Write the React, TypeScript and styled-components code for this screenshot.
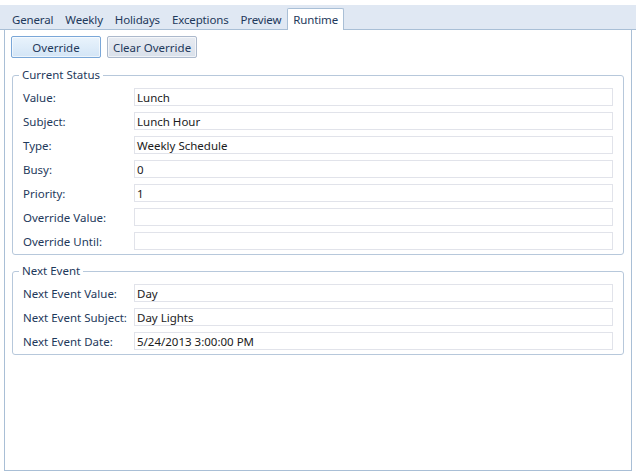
import styled, { createGlobalStyle } from 'styled-components';

const GlobalStyle = createGlobalStyle`
  html, body {
    margin: 0;
    padding: 0;
    background: #ffffff;
  }
  body {
    font-family: 'Noto Sans', 'Open Sans', Arial, sans-serif;
    font-size: 11.5px;
  }
`;

const tabs = ['General', 'Weekly', 'Holidays', 'Exceptions', 'Preview', 'Runtime'];

const currentStatus: { label: string; value: string }[] = [
  { label: 'Value:', value: 'Lunch' },
  { label: 'Subject:', value: 'Lunch Hour' },
  { label: 'Type:', value: 'Weekly Schedule' },
  { label: 'Busy:', value: '0' },
  { label: 'Priority:', value: '1' },
  { label: 'Override Value:', value: '' },
  { label: 'Override Until:', value: '' },
];

const nextEvent: { label: string; value: string }[] = [
  { label: 'Next Event Value:', value: 'Day' },
  { label: 'Next Event Subject:', value: 'Day Lights' },
  { label: 'Next Event Date:', value: '5/24/2013 3:00:00 PM' },
];

function App() {
  return (
    <Window>
      <GlobalStyle />
      <TabStrip>
        {tabs.map((tab) => (
          <TabItem key={tab} $active={tab === 'Runtime'}>
            {tab}
          </TabItem>
        ))}
      </TabStrip>

      <Panel>
        <Toolbar>
          <Button $primary>Override</Button>
          <Button>Clear Override</Button>
        </Toolbar>

        <GroupBox>
          <legend>Current Status</legend>
          {currentStatus.map((row) => (
            <FieldRow key={row.label}>
              <FieldLabel>{row.label}</FieldLabel>
              <TextBox>{row.value}</TextBox>
            </FieldRow>
          ))}
        </GroupBox>

        <GroupBox>
          <legend>Next Event</legend>
          {nextEvent.map((row) => (
            <FieldRow key={row.label}>
              <FieldLabel>{row.label}</FieldLabel>
              <TextBox>{row.value}</TextBox>
            </FieldRow>
          ))}
        </GroupBox>
      </Panel>
    </Window>
  );
}

const Window = styled.div`
  width: 636px;
  height: 475px;
  padding-top: 5px;
  box-sizing: border-box;
  display: flex;
  flex-direction: column;
  background: #ffffff;
  overflow: hidden;
`;

const TabStrip = styled.div`
  height: 25px;
  flex: none;
  display: flex;
  align-items: flex-end;
  padding-left: 6px;
  background: #e0e8f3;
  border-bottom: 1px solid #a9bfd6;
  box-sizing: border-box;
`;

const TabItem = styled.div<{ $active?: boolean }>`
  height: ${({ $active }) => ($active ? '22px' : '20px')};
  padding: 0 5px ${({ $active }) => ($active ? '1px' : '0')};
  display: flex;
  align-items: center;
  box-sizing: border-box;
  color: #1e395b;
  white-space: nowrap;
  letter-spacing: -0.15px;
  margin-bottom: ${({ $active }) => ($active ? '-1px' : '0')};
  background: ${({ $active }) => ($active ? '#ffffff' : 'transparent')};
  border: 1px solid ${({ $active }) => ($active ? '#a9bfd6' : 'transparent')};
  border-bottom: none;
  border-radius: 2px 2px 0 0;
`;

const Panel = styled.div`
  flex: 1;
  margin: 0 4px 4px 4px;
  border: 1px solid #a9bfd6;
  border-top: none;
  padding: 6px 7px 0 6px;
  display: flex;
  flex-direction: column;
`;

const Toolbar = styled.div`
  display: flex;
  gap: 6px;
  margin-bottom: 9px;
`;

const Button = styled.button<{ $primary?: boolean }>`
  width: 90px;
  height: 22px;
  padding: 0;
  font-family: inherit;
  font-size: 11.5px;
  color: #1e395b;
  border-radius: 2px;
  border: 1px solid ${({ $primary }) => ($primary ? '#7aa7d8' : '#acb9cc')};
  background: ${({ $primary }) =>
    $primary
      ? 'linear-gradient(#e9f3fc, #d3e5f6)'
      : 'linear-gradient(#e7ebf2, #d9e0ea)'};
  box-shadow: inset 0 0 0 1px rgba(255, 255, 255, 0.6);
`;

const GroupBox = styled.fieldset`
  margin: 0 0 8px 1px;
  padding: 5px 10px 4px 10px;
  border: 1px solid #b7c8db;
  border-radius: 3px;
  display: flex;
  flex-direction: column;
  gap: 6px;
  min-width: 0;

  legend {
    color: #1e395b;
    padding: 0 3px;
    margin-left: -4px;
    line-height: 16px;
  }
`;

const FieldRow = styled.div`
  display: grid;
  grid-template-columns: 111px 1fr;
  align-items: center;
`;

const FieldLabel = styled.span`
  color: #1e395b;
  white-space: nowrap;
`;

const TextBox = styled.div`
  height: 18px;
  box-sizing: border-box;
  border: 1px solid #e1e3ea;
  padding: 0 2px;
  display: flex;
  align-items: center;
  color: #1b1b1b;
  white-space: nowrap;
`;

export default App;
